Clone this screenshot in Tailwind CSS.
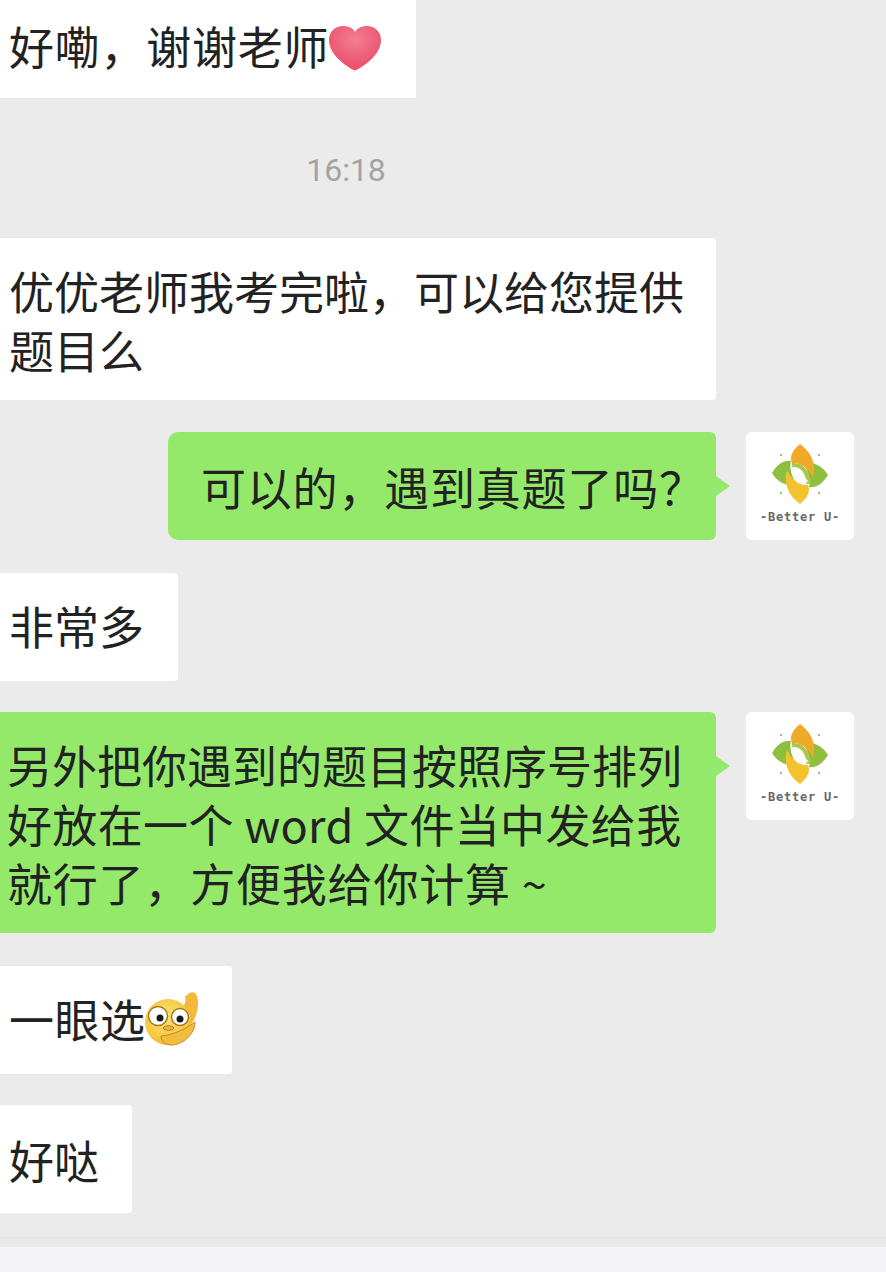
<!DOCTYPE html>
<html lang="zh-CN">
<head>
    <meta charset="UTF-8">
    <title>Chat</title>
    <script src="https://cdn.jsdelivr.net/npm/@tailwindcss/browser@4"></script>
</head>
<body class="w-[886px] h-[1272px] overflow-hidden bg-[#ebebeb] text-[#222] text-[45px] leading-[59px] font-['Noto_Sans_CJK_SC','Noto_Sans',sans-serif]">

    <div class="flex flex-col h-[1237px]">
        <!-- Incoming -->
        <div class="w-[416px] h-[98px] bg-white flex items-center pl-[9px] pb-[8px]">
            <span class="tracking-[0.75px]">好嘞，谢谢老师</span>
            <svg class="w-[54px] h-[46px] -ml-[1px] mt-[6px]" viewBox="0 0 54 46">
                <defs>
                    <radialGradient id="heart" cx="0.5" cy="0.3" r="0.75">
                        <stop offset="0" stop-color="#f27f92"/>
                        <stop offset="0.55" stop-color="#ee5f78"/>
                        <stop offset="1" stop-color="#e94a63"/>
                    </radialGradient>
                </defs>
                <path d="M27 45.5C21 43 1 31 1 15C1 6 8 1 15 1C20 1 25 3 27 7C29 3 34 1 39 1C46 1 53 6 53 15C53 31 33 43 27 45.5Z" fill="url(#heart)"/>
            </svg>
        </div>

        <!-- Time -->
        <div class="h-[140px] flex items-center justify-center pr-[194px] pt-[4px] text-[32px] text-[#a3a3a3] font-['Roboto',sans-serif]">
            <span>16:18</span>
        </div>

        <div class="w-[716px] h-[162px] bg-white rounded-r-[4px] pl-[9px] pt-[23px]">
            优优老师我考完啦，可以给您提供<br>题目么
        </div>

        <!-- Outgoing -->
        <div class="mt-[32px] flex items-start">
            <div class="relative ml-[168px] w-[548px] h-[108px] bg-[#94e96a] rounded-l-[10px] rounded-r-[6px] pl-[33px] flex items-center">
                <span class="tracking-[0.8px]">可以的，遇到真题了吗？</span>
                <div class="absolute left-full top-[44px] border-y-[10px] border-y-transparent border-l-[14px] border-l-[#94e96a]"></div>
            </div>
            <div class="ml-[30px] w-[108px] h-[108px] bg-white rounded-md flex flex-col items-center pt-[12px]">
                <svg class="w-[60px] h-[60px]" viewBox="0 0 60 60">
                    <path d="M2 29C8 19 15 16 21 17C19 24 22 34 27 40C18 43 8 39 2 29Z" fill="#8fbf3f"/>
                    <path d="M58 31C52 41 45 44 39 43C41 36 38 26 33 20C42 17 52 21 58 31Z" fill="#8fbf3f"/>
                    <path d="M30 0C41 8 47 20 43 34C39 25 31 18 22 19C19 12 23 6 30 0Z" fill="#eeaa28"/>
                    <path d="M30 60C19 52 13 40 17 26C21 35 29 42 38 41C41 48 37 54 30 60Z" fill="#f4c22e"/>
                    <path d="M22 21C30 20 38 26 38 40" fill="none" stroke="#a9c94a" stroke-width="4"/>
                    <path d="M23 24C27 26 33 34 37 38" fill="none" stroke="#fff" stroke-width="3"/>
                    <circle cx="11" cy="11" r="1.2" fill="#9cc56a"/>
                    <circle cx="49" cy="11" r="1.2" fill="#9cc56a"/>
                    <circle cx="11" cy="49" r="1.2" fill="#9cc56a"/>
                    <circle cx="49" cy="49" r="1.2" fill="#9cc56a"/>
                </svg>
                <span class="text-[12px] leading-[14px] mt-[6px] font-bold text-[#666] tracking-[0.8px] font-['DejaVu_Sans_Mono',monospace]">-Better U-</span>
            </div>
        </div>

        <div class="mt-[33px] w-[178px] h-[108px] bg-white rounded-r-[4px] pl-[9px] pb-[4px] flex items-center">非常多</div>

        <div class="mt-[31px] flex items-start">
            <div class="relative w-[716px] h-[221px] bg-[#94e96a] rounded-r-[6px] pl-[7px] pt-[23px]">
                另外把你遇到的题目按照序号排列<br><span class="tracking-[0.35px]">好放在一个 word 文件当中发给我</span><br><span class="tracking-[0.8px]">就行了，方便我给你计算 ~</span>
                <div class="absolute left-full top-[44px] border-y-[10px] border-y-transparent border-l-[14px] border-l-[#94e96a]"></div>
            </div>
            <div class="ml-[30px] w-[108px] h-[108px] bg-white rounded-md flex flex-col items-center pt-[12px]">
                <svg class="w-[60px] h-[60px]" viewBox="0 0 60 60">
                    <path d="M2 29C8 19 15 16 21 17C19 24 22 34 27 40C18 43 8 39 2 29Z" fill="#8fbf3f"/>
                    <path d="M58 31C52 41 45 44 39 43C41 36 38 26 33 20C42 17 52 21 58 31Z" fill="#8fbf3f"/>
                    <path d="M30 0C41 8 47 20 43 34C39 25 31 18 22 19C19 12 23 6 30 0Z" fill="#eeaa28"/>
                    <path d="M30 60C19 52 13 40 17 26C21 35 29 42 38 41C41 48 37 54 30 60Z" fill="#f4c22e"/>
                    <path d="M22 21C30 20 38 26 38 40" fill="none" stroke="#a9c94a" stroke-width="4"/>
                    <path d="M23 24C27 26 33 34 37 38" fill="none" stroke="#fff" stroke-width="3"/>
                    <circle cx="11" cy="11" r="1.2" fill="#9cc56a"/>
                    <circle cx="49" cy="11" r="1.2" fill="#9cc56a"/>
                    <circle cx="11" cy="49" r="1.2" fill="#9cc56a"/>
                    <circle cx="49" cy="49" r="1.2" fill="#9cc56a"/>
                </svg>
                <span class="text-[12px] leading-[14px] mt-[6px] font-bold text-[#666] tracking-[0.8px] font-['DejaVu_Sans_Mono',monospace]">-Better U-</span>
            </div>
        </div>

        <div class="mt-[33px] w-[232px] h-[108px] bg-white rounded-r-[4px] pl-[9px] pb-[4px] flex items-center">
            <span class="tracking-[0.5px]">一眼选</span>
            <svg class="w-[56px] h-[56px] -ml-[1px] mt-[4px]" viewBox="0 0 56 56">
                <defs>
                    <radialGradient id="face" cx="0.45" cy="0.4" r="0.65">
                        <stop offset="0" stop-color="#fbe27a"/>
                        <stop offset="0.75" stop-color="#f6c83f"/>
                        <stop offset="1" stop-color="#e8a92a"/>
                    </radialGradient>
                </defs>
                <path d="M40 5C43 1 48 -1 50 1C54 4 54 16 50 26C47 33 42 36 38 34L36 18C40 14 41 9 40 5Z" fill="#f2b93a"/>
                <circle cx="23" cy="30" r="23" fill="url(#face)"/>
                <circle cx="13" cy="24" r="9.5" fill="#fff" stroke="#a97a1c" stroke-width="1.5"/>
                <circle cx="35" cy="25" r="8.5" fill="#fff" stroke="#a97a1c" stroke-width="1.5"/>
                <circle cx="15" cy="26" r="3.5" fill="#1a1a1a"/>
                <circle cx="35" cy="27" r="3.5" fill="#1a1a1a"/>
                <path d="M18 36C20 33 27 33 29 36C27 39 20 39 18 36Z" fill="#f0b53a" stroke="#a97a1c" stroke-width="1"/>
                <path d="M16 44C26 43 38 39 50 30C50 42 38 53 26 53C20 53 16 49 16 44Z" fill="#f2bd3e" stroke="#c98a1e" stroke-width="1"/>
            </svg>
        </div>

        <div class="mt-[31px] w-[132px] h-[108px] bg-white rounded-r-[4px] pl-[9px] flex items-center">好哒</div>
    </div>

    <!-- Bottom bar edge -->
    <div class="h-[10px] bg-[#e9e9eb] border-t border-[#e2e2e4]"></div>
    <div class="h-[25px] bg-[#f4f3f6]"></div>

</body>
</html>
